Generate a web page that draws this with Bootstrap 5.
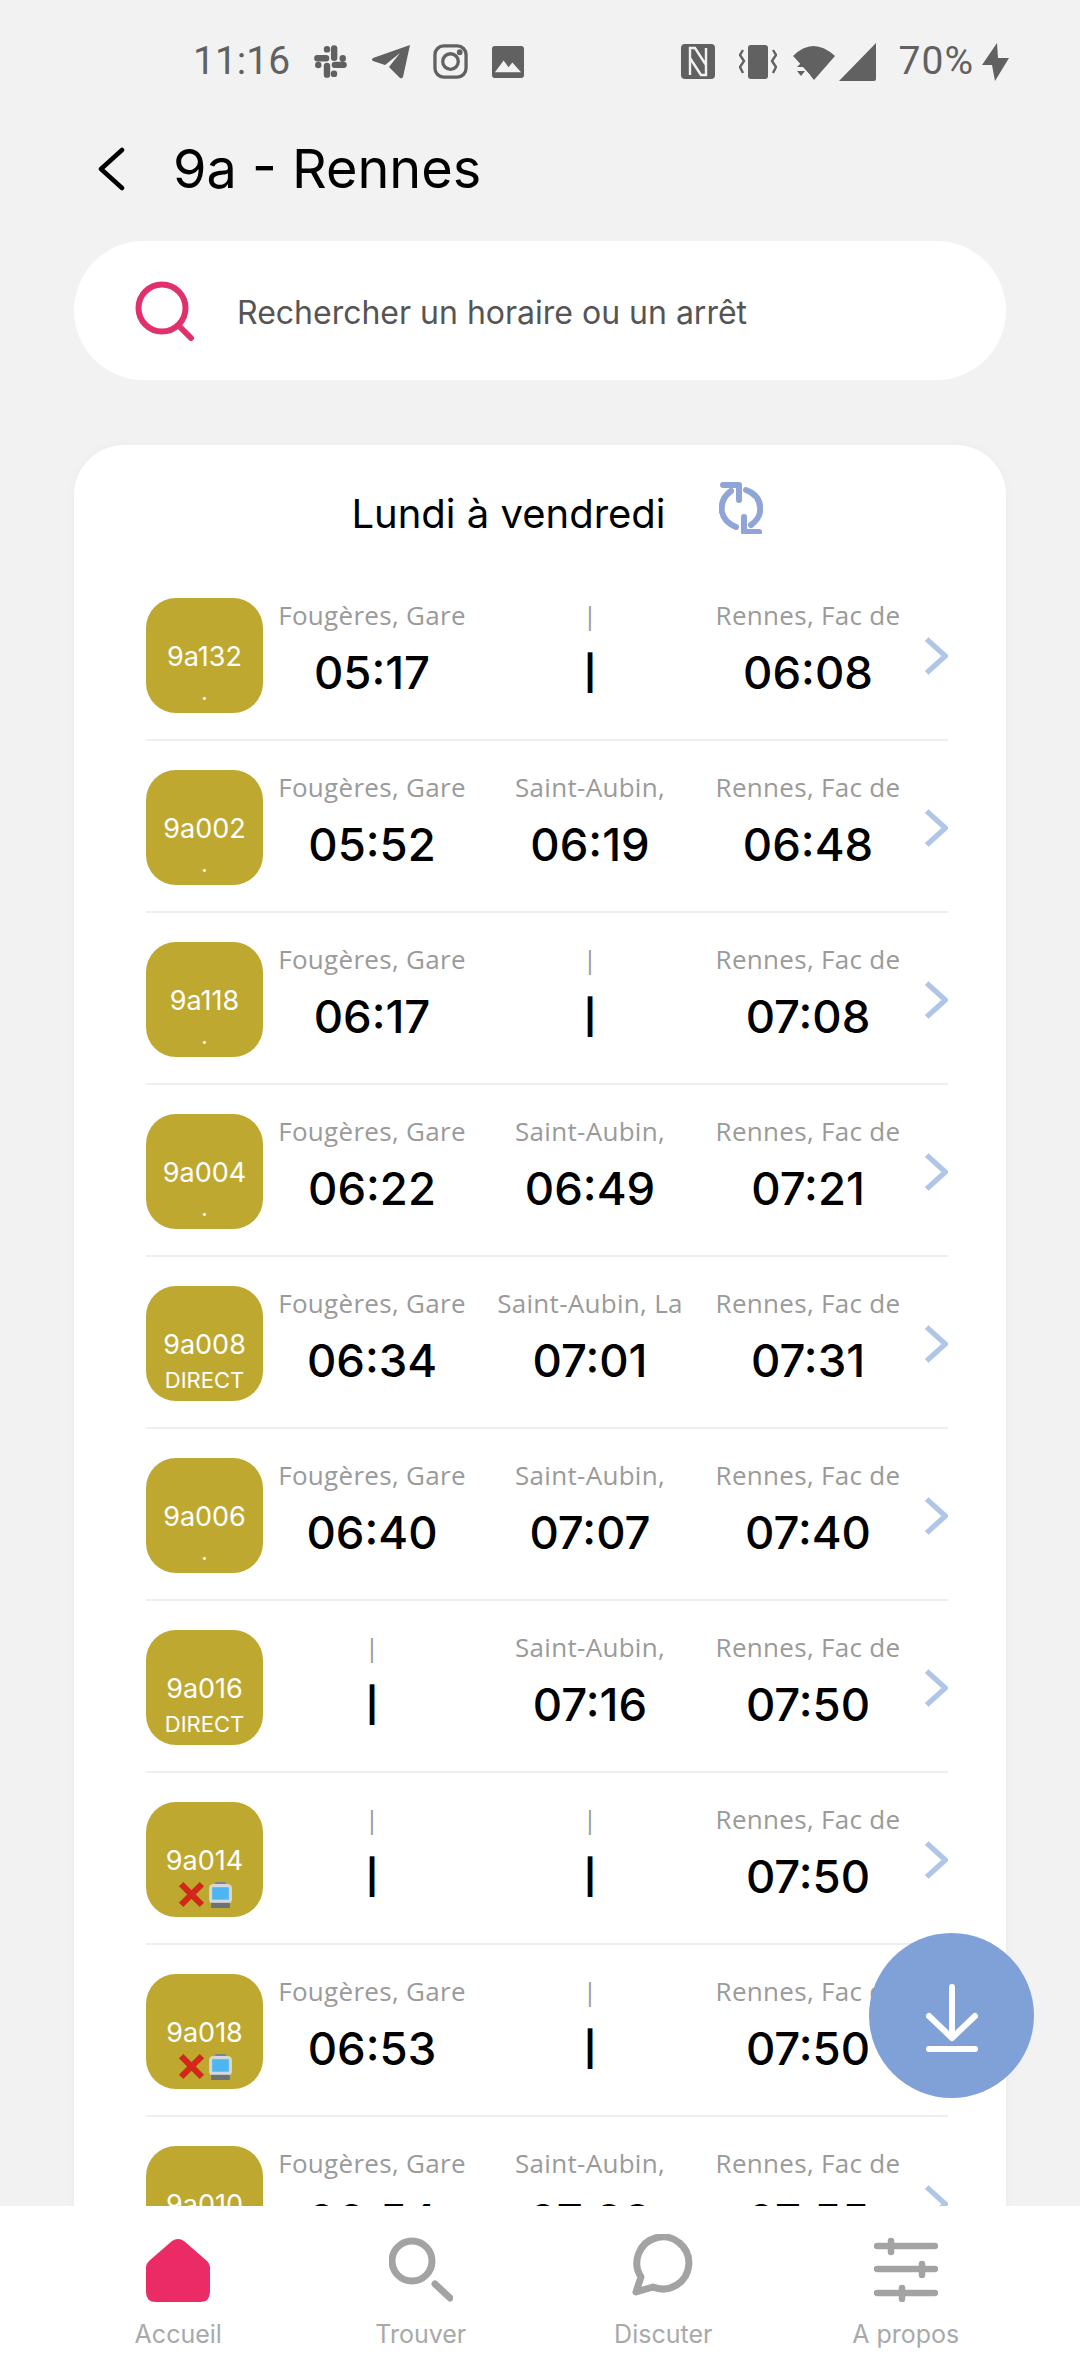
<!DOCTYPE html>
<html lang="fr">
<head>
  <meta charset="UTF-8" />
  <meta name="viewport" content="width=device-width, initial-scale=1.0"/>
  <title>9a - Rennes</title>
  <link href="https://cdn.jsdelivr.net/npm/bootstrap@5.3.2/dist/css/bootstrap.min.css" rel="stylesheet" />
  <style>
    html, body { margin: 0; height: 2376px; overflow: hidden; }
    body { background: #f2f2f2; font-family: "Inter", sans-serif; }
    .ecran { width: 1080px; height: 2376px; position: relative; overflow: hidden; }
    .statut { height: 96px; padding: 27px 71px 0 193px; color: #616161; font-family: "Roboto", sans-serif; font-size: 39px; line-height: 1; }
    .statut svg { display: block; fill: #616161; }
    .gi { margin-left: 22px; }
    .pourcent { margin-left: 22px; letter-spacing: 1px; }
    .entete { height: 145px; padding-left: 97px; }
    .entete h1 { font-size: 54px; font-weight: 400; margin: 0 0 0 48px; color: #000; line-height: 1; }
    .recherche { height: 139px; margin: 0 74px; border-radius: 70px; padding-left: 61px; color: #555; font-size: 32px; }
    .recherche span { margin: 5px 0 0 42px; }
    .bloc { margin: 65px 74px 0; border-radius: 50px; height: 1900px; overflow: hidden; box-shadow: 0 0 12px rgba(0,0,0,.03); }
    .jour { height: 124px; padding-top: 49px; padding-left: 34px; font-size: 40px; color: #000; }
    .jour span { margin-right: 53px; line-height: 1; }
    .jour svg { margin-top: -12px; }
    .ligne { height: 172px; margin: 0 58px 0 72px; border-bottom: 2px solid #efefef; padding-top: 29px; }
    .pastille { width: 117px; height: 115px; background: #bfa830; border-radius: 30px; color: #fff; flex: none; }
    .num { font-size: 27px; line-height: 34px; margin-top: 42px; }
    .sous { font-size: 22px; line-height: 32px; height: 34px; gap: 4px; margin-top: 1px; }
    .sous svg { margin-top: -3px; }
    .colonne { width: 218px; flex: none; text-align: center; margin-top: -2px; }
    .arret { font-family: "Open Sans", sans-serif; font-size: 26px; color: #9a9a9a; line-height: 38px; height: 38px; white-space: nowrap; letter-spacing: .3px; }
    .heure { font-size: 45.5px; font-weight: 500; color: #000; line-height: 54px; margin-top: 12px; }
    .vide { font-size: 34px; font-weight: 700; }
    .fleche { margin: 36px 0 0 7px; }
    .dl { position: absolute; left: 869px; top: 1933px; width: 165px; height: 165px; border-radius: 50%; background: #7fa1d8; }
    .barre { position: absolute; left: 0; right: 0; bottom: 0; height: 170px; background: #fff; padding-left: 57px; }
    .onglet { width: 242.5px; padding-top: 28px; color: #a9a9a9; }
    .onglet .ico { height: 68px; }
    .onglet small { font-size: 25px; line-height: 30px; margin-top: 17px; }
  </style>
</head>
<body>

<div class="ecran d-flex flex-column">
  <div class="statut d-flex align-items-center flex-shrink-0">
    <span>11:16</span>
    <!-- slack -->
    <svg class="gi" width="37" height="35" viewBox="0 0 24 24" style="fill:none;stroke:#616161;stroke-width:4.4;stroke-linecap:round"><path d="M3 9.8H9M9.6 3.6v.1M14.5 3v6.5M20.4 9.8v.1M15 14.3h6M14.4 20.4v.1M9.6 15v6M3.6 14.3v.1"/></svg>
    <!-- telegram -->
    <svg class="gi" width="40" height="35" viewBox="0 0 40 35"><path d="M39 1 2 14q-2 2 0 3l12 4L29 9 18 23l11 11q2 1 3-1z"/></svg>
    <!-- instagram -->
    <svg class="gi" width="35" height="35" viewBox="0 0 36 36" style="fill:none;stroke:#616161;stroke-width:3.4"><rect x="2" y="2" width="32" height="32" rx="9"/><circle cx="18" cy="18" r="8"/><circle cx="27.5" cy="8.5" r="1.3" fill="#616161"/></svg>
    <!-- image -->
    <svg class="ms-4" width="32" height="32" viewBox="0 0 33 33"><rect width="33" height="33" rx="3"/><path d="M3 27 12 15l5 7 4-5 9 10z" fill="#f2f2f2"/></svg>

    <svg class="ms-auto" width="34" height="35" viewBox="0 0 34 35"><rect width="34" height="35" rx="4"/><path d="M9 31V4h5l11 17M25 4v27h-5L9 14" style="fill:none;stroke:#f2f2f2;stroke-width:2.4"/></svg>
    <svg class="ms-4" width="38" height="34" viewBox="0 0 38 34"><rect x="9" y="0" width="20" height="34" rx="3"/><path d="M4 5 1 10l4 6-4 6 3 6M34 5l3 5-4 6 4 6-3 6" style="fill:none;stroke:#616161;stroke-width:2.4"/></svg>
    <svg class="ms-3" width="42" height="36" viewBox="0 0 42 36"><path d="M0 12Q20-8 42 12L21 36 17 31z"/><path d="M0 12 17 31v5H6V22z" fill="#f2f2f2"/><path d="M4 23l4-4 4 4zM4 27l4 5 4-5z"/></svg>
    <svg class="ms-1" width="38" height="38" viewBox="0 0 38 38"><path d="M37 0v36q0 2-2 2H0z"/></svg>
    <span class="pourcent">70%</span>
    <svg class="ms-2" width="27" height="38" viewBox="0 0 27 38"><path d="M15 0 0 22h10l3 16L27 15H16z"/></svg>
  </div>

  <div class="entete d-flex align-items-center flex-shrink-0">
    <svg width="28" height="44" viewBox="0 0 28 44" style="fill:none;stroke:#000;stroke-width:4.5;stroke-linecap:round;stroke-linejoin:round"><path d="M25 3 4 22l21 19"/></svg>
    <h1>9a - Rennes</h1>
  </div>

  <div class="recherche bg-white d-flex align-items-center flex-shrink-0">
    <svg width="60" height="60" viewBox="0 0 60 60" style="fill:none;stroke:#e0316c;stroke-width:6;stroke-linecap:round"><circle cx="27" cy="27" r="23.5"/><path d="M44 45 56 57"/></svg>
    <span>Rechercher un horaire ou un arrêt</span>
  </div>

  <div class="bloc card border-0 flex-shrink-0">
    <div class="jour d-flex justify-content-center flex-shrink-0">
      <span>Lundi à vendredi</span>
      <svg width="44" height="52" viewBox="0 0 44 52" style="fill:none;stroke:#8fa5d8;stroke-width:6;stroke-linecap:round;stroke-linejoin:round"><path d="M12 9Q1 17 3 30q2 10 14 15M27 8q16 6 14 22-1 7-9 13"/><path d="M4 3h16v15M25 35v15h15"/></svg>
    </div>
    <div id="horaires"></div>
  </div>

  <div class="dl d-flex align-items-center justify-content-center">
    <svg class="mt-1" width="52" height="68" viewBox="0 0 52 68" style="fill:none;stroke:#fff;stroke-width:6;stroke-linecap:round;stroke-linejoin:round"><path d="M26 3v51M3 32l23 22 23-22M3 65h46"/></svg>
  </div>

  <nav class="barre d-flex">
    <div class="onglet d-flex flex-column align-items-center">
      <div class="ico"><svg width="64" height="68" viewBox="0 -4 64 68"><path d="M26 3Q32-1 38 3L61 23Q64 26 64 29V54Q64 64 54 64H10Q0 64 0 54V29Q0 26 3 23z" fill="#ea2b66"/></svg></div>
      <small>Accueil</small>
    </div>
    <div class="onglet d-flex flex-column align-items-center">
      <div class="ico"><svg width="64" height="68" viewBox="0 -4 64 68" style="fill:none;stroke:#a3a3a3;stroke-width:7;stroke-linecap:round"><circle cx="23" cy="23" r="20"/><path d="M46 46 61 60"/></svg></div>
      <small>Trouver</small>
    </div>
    <div class="onglet d-flex flex-column align-items-center">
      <div class="ico"><svg width="64" height="68" viewBox="0 0 64 68" style="fill:none;stroke:#a3a3a3;stroke-width:7;stroke-linejoin:round"><path d="M22 53A26 26 0 1 0 10 43L5 58z"/></svg></div>
      <small>Discuter</small>
    </div>
    <div class="onglet d-flex flex-column align-items-center">
      <div class="ico"><svg width="64" height="68" viewBox="0 -4 64 68" style="fill:none;stroke:#a3a3a3;stroke-width:6.5;stroke-linecap:round"><path d="M3 8h58M3 31h58M3 55h58M17 3v11M48 26v11M28 50v11"/></svg></div>
      <small>A propos</small>
    </div>
  </nav>
</div>

<script>
  const X = '<svg width="27" height="27" viewBox="0 0 26 26"><path d="M3 3 23 23M23 3 3 23" style="fill:none;stroke:#d6261c;stroke-width:6"/></svg>'
  const BUS = '<svg width="23" height="26" viewBox="0 0 22 25"><rect x="6" y="0" width="10" height="3" fill="#7d8589"/><rect x="0" y="2" width="22" height="19" rx="4" fill="#d4d8da"/><rect x="3" y="5" width="16" height="12" fill="#4db6f0"/><rect x="2" y="20" width="18" height="5" fill="#6c7377"/></svg>'

  // code, sous-titre, fougeres, saint-aubin, rennes, variante du nom
  const horaires = [
    ["9a132", ".", "05:17", "", "06:08", 0],
    ["9a002", ".", "05:52", "06:19", "06:48", 1],
    ["9a118", ".", "06:17", "", "07:08", 0],
    ["9a004", ".", "06:22", "06:49", "07:21", 1],
    ["9a008", "DIRECT", "06:34", "07:01", "07:31", 2],
    ["9a006", ".", "06:40", "07:07", "07:40", 1],
    ["9a016", "DIRECT", "", "07:16", "07:50", 1],
    ["9a014", "bus", "", "", "07:50", 0],
    ["9a018", "bus", "06:53", "", "07:50", 0],
    ["9a010", ".", "06:54", "07:23", "07:55", 1]
  ]

  function colonne(nom, h) {
    return `<div class="colonne"><div class="arret">${h ? nom : "|"}</div><div class="heure${h ? "" : " vide"}">${h || "|"}</div></div>`
  }

  document.getElementById("horaires").innerHTML = horaires.map(l => {
    const sous = l[1] === "bus" ? X + BUS : l[1]
    const milieu = l[5] === 2 ? "Saint-Aubin, La" : "Saint-Aubin,"
    return `<div class="ligne d-flex">
      <div class="pastille text-center d-flex flex-column align-items-center">
        <div class="num">${l[0]}</div><div class="sous d-flex justify-content-center align-items-center">${sous}</div>
      </div>
      ${colonne("Fougères, Gare", l[2])}${colonne(milieu, l[3])}${colonne("Rennes, Fac de", l[4])}
      <svg class="fleche" width="27" height="44" viewBox="0 0 27 44" style="fill:none;stroke:#afc6e8;stroke-width:6;stroke-linejoin:round"><path d="M3 3 24 22 3 41"/></svg>
    </div>`
  }).join("")
</script>

<script src="https://cdn.jsdelivr.net/npm/bootstrap@5.3.2/dist/js/bootstrap.bundle.min.js"></script>
</body>
</html>
